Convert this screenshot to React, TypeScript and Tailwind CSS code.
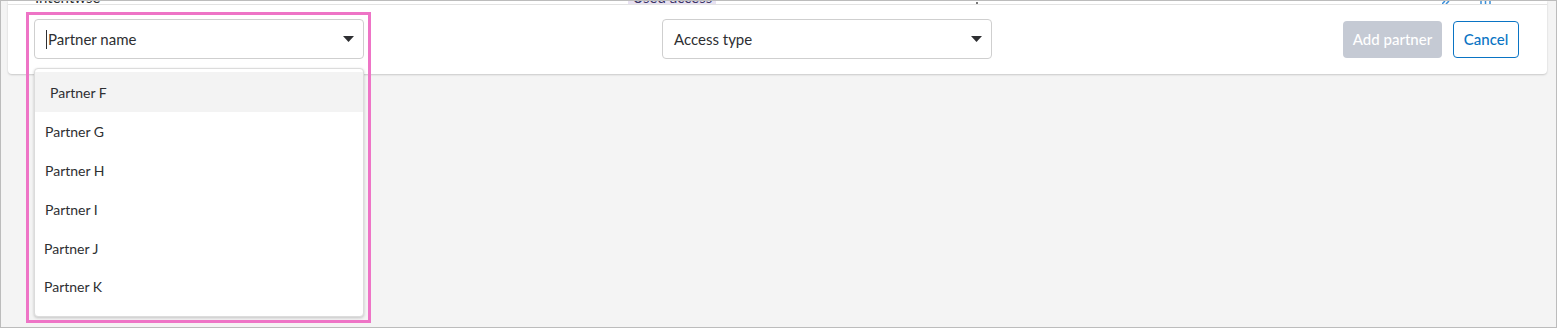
import { useState } from "react";

const partners = ["Partner F", "Partner G", "Partner H", "Partner I", "Partner J", "Partner K"];

function Caret() {
  return (
    <svg width="11" height="6" viewBox="0 0 11 6" className="shrink-0">
      <path d="M0 0h11L5.5 6z" fill="#2e2f32" />
    </svg>
  );
}

function App() {
  const [active] = useState(0);

  return (
    <div
      className="w-[1557px] h-[328px] bg-[#f4f4f4] border border-[#bcbcbc] overflow-hidden text-[#2e2f32]"
      style={{ fontFamily: "Lato, 'Noto Sans', sans-serif" }}
    >
      <div className="ml-[7px] mr-[9px] bg-white rounded-b shadow-[0_1px_2px_rgba(0,0,0,0.18)]">
        {/* previous row, scrolled out of view */}
        <div className="h-[3px] overflow-hidden border-b border-[#e3e3e3] box-content relative">
          <div className="flex items-end h-[3px] text-[15px] leading-none">
            <span className="ml-[27px] -mb-[1px]">Intentwse</span>
            <span className="ml-[528px] -mb-[1px] bg-[#e8e2f2] px-1 text-[#3b3566]">Used access</span>
            <span className="ml-[260px] w-[2px] h-[2px] bg-[#777]" />
            <svg width="9" height="3" viewBox="0 0 9 3" className="ml-[464px]">
              <path d="M0 3L3 0M4 3L7 0" stroke="#3a8ed8" strokeWidth="1.5" />
            </svg>
            <svg width="11" height="3" viewBox="0 0 11 3" className="ml-[29px]">
              <path d="M1 0v3M5.5 0v3M10 0v3" stroke="#3a8ed8" strokeWidth="1.5" />
            </svg>
          </div>
        </div>

        <div className="flex items-start h-[69px] pl-[26px] pr-[28px] pt-[14px]">
          <div className="relative w-[330px]">
            <div className="flex items-center h-[40px] border border-[#cfcfcf] rounded pl-[11px] pr-[9px]">
              <span className="w-px h-[19px] bg-[#2e2f32]" />
              <span className="text-[15px] flex-1 ml-[1px]">Partner name</span>
              <Caret />
            </div>

            <div className="absolute left-0 top-[49px] w-[330px] h-[249px] bg-white border border-[#dcdcdc] rounded shadow-[0_1px_3px_rgba(0,0,0,0.2)] pt-[3px] z-10">
              {partners.map((p, i) => (
                <div
                  key={p}
                  className={
                    i === active
                      ? "h-[40px] flex items-center pl-[15px] bg-[#f3f3f3] text-[14px]"
                      : i < 4
                      ? "h-[39px] flex items-center pl-[10px] text-[14px]"
                      : "h-[38px] flex items-center pl-[9px] text-[14px]"
                  }
                >
                  {p}
                </div>
              ))}
            </div>

            {/* review highlight */}
            <div className="absolute -left-[8px] -top-[7px] w-[345px] h-[311px] border-[3px] border-[#ee74c6] pointer-events-none z-20" />
          </div>

          <div className="ml-[298px] w-[330px] flex items-center h-[40px] border border-[#cfcfcf] rounded pl-[11px] pr-[9px]">
            <span className="text-[15px] flex-1">Access type</span>
            <Caret />
          </div>

          <div className="ml-auto flex items-center gap-[11px] mt-[2px]">
            <button className="h-[37px] w-[99px] rounded bg-[#c5cad4] text-white text-[15px] font-medium">
              Add partner
            </button>
            <button className="h-[37px] w-[66px] rounded border border-[#0a74c4] text-[#0a74c4] text-[15px] font-medium">
              Cancel
            </button>
          </div>
        </div>
      </div>
    </div>
  );
}

export default App;
